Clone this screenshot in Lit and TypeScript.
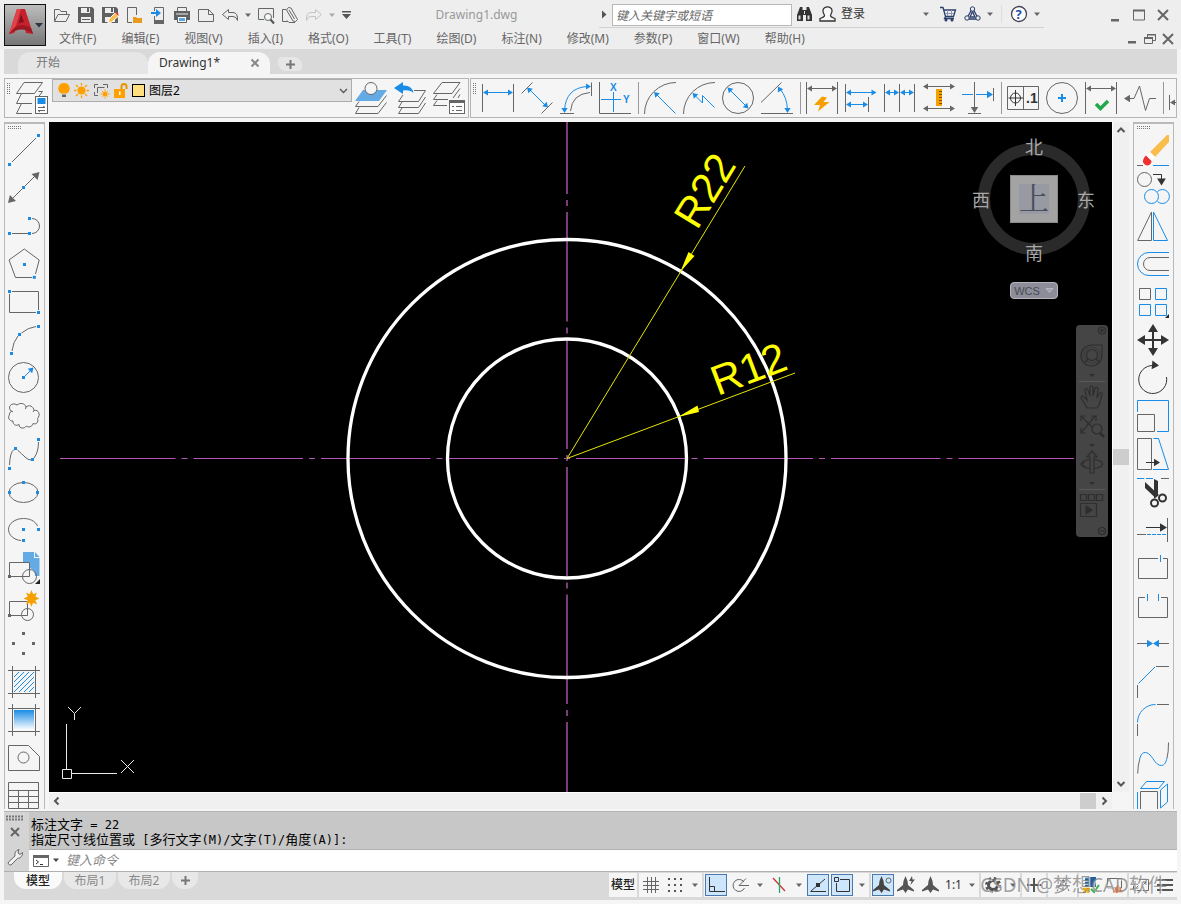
import { LitElement, html, svg, css, nothing } from "lit";
import { customElement, state } from "lit/decorators.js";

type Art = unknown;

/* ---- small drawing vocabulary shared by every toolbar glyph ---- */
const g = (d: string) => svg`<path class="g" d=${d} />`;
const b = (d: string) => svg`<path class="b" d=${d} />`;
const k = (d: string) => svg`<path class="k" d=${d} />`;
const fill = (c: string, d: string) => svg`<path d=${d} fill=${c} />`;
const dot = (x: number, y: number, c = "#1a8ce6") =>
  svg`<rect x=${x - 1.5} y=${y - 1.5} width="3" height="3" fill=${c} />`;
const ring = (x: number, y: number, r: number, cls = "g") =>
  svg`<circle class=${cls} cx=${x} cy=${y} r=${r} />`;
const head = (x: number, y: number, deg: number, c = "#1a8ce6", s = 5) =>
  svg`<path fill=${c} transform=${`translate(${x} ${y}) rotate(${deg})`} d=${`M0 0L${-s} ${-s * 0.62}V${s * 0.62}Z`} />`;
const GRAY = "#666";
const DARK = "#333";
const BLUE = "#1a8ce6";

const pic = (w: number, h: number, art: Art) =>
  html`<svg width=${w} height=${h} viewBox=${`0 0 ${w} ${h}`} aria-hidden="true">${art}</svg>`;
const caret = (c = "#666") => html`<svg width="8" height="5" viewBox="0 0 8 5" aria-hidden="true"><path d="M1 0.500h6L4 4z" fill=${c} /></svg>`;

interface Tool { name: string; art: Art }

const drawTools: Tool[] = [
  { name: "直线", art: [g("M4 28L28 4"), dot(1.5, 30.5), dot(30.5, 1.5)] },
  { name: "构造线", art: [g("M4 27L27 4"), head(0, 31, 135, GRAY, 7), head(31.5, 0, -45, GRAY, 7), dot(15.5, 15.5)] },
  { name: "多段线", art: [g("M4 23.5H20M24 8.5A7.5 7.5 0 0 1 24 23.5"), dot(1.5, 23.5), dot(21.5, 23.5), dot(21.5, 8.5)] },
  { name: "多边形", art: [g("M24 29.5H7.5L1 12L16.3 1L31.2 12L27.5 26"), dot(26.3, 29.3), dot(16.5, 16.5)] },
  { name: "矩形", art: [g("M4 5.500H30.500V24M28 26.500H1.500V8"), dot(1.5, 5.5), dot(30.5, 26.5)] },
  { name: "圆弧", art: [g("M4 27Q5 18 10 12M13.500 9Q20 3.500 28 2.500"), dot(3.5, 29.5), dot(11.5, 10.5), dot(30.5, 2.5)] },
  { name: "圆", art: [ring(15.5, 15.5, 15), b("M16 15L23 8"), head(25.5, 5.5, -45), dot(15.5, 15.5)] },
  { name: "修订云线", art: [g("M3.500 11.500C-1.500 7 4 1.500 9 5C12 2.500 17 3 18 7C21 4.500 25.500 6 26 10.500C30.500 9 33 15 29.500 18.500C31 22 28 25 25 23.500C24 27.500 20 27.500 18.500 26C16.500 29 11 29 11 24.500C8 26.500 4.500 24.500 5 21C1 21.500 -0.500 17 1.500 15C1 13.500 2 12 3.500 11.500Z"), g("M2.500 11Q4 11 5 12M18 7L17.500 9M26 10.500L25 12")] },
  { name: "样条曲线", art: [g("M1.500 27Q2 14 6 11.500M9.500 12Q14 16 17 19Q20 22 23 22M26 20Q30.500 14 30.500 4"), dot(1.5, 30.5), dot(7.5, 10.5), dot(24.5, 21.5), dot(30.5, 1.5)] },
  { name: "椭圆", art: [svg`<ellipse class="g" cx="15.500" cy="16.500" rx="14.500" ry="10" />`, dot(15.5, 6.5), dot(1.5, 16.5), dot(29.5, 16.5)] },
  { name: "椭圆弧", art: [g("M29.500 12C27 6.500 21 4.500 15.500 4.500C7 4.500 .5 9.500 .5 15.500C.5 21 6 26 13 26.500"), dot(15.5, 15.5), dot(30.5, 15.5), dot(15.5, 26.5)] },
  { name: "插入块", art: [fill("#64aae4", "M15 0H26V6H31.500V24H27A7 7 0 0 0 21.500 16V10H15Z"), fill("#64aae4", "M27 0L31.500 5H27Z"), g("M1.500 24.500V10.500H21.500V24.500Z"), ring(21.5, 24.5, 7), dot(1.5, 24.5, GRAY), fill("#222", "M32 27V32H27Z")] },
  { name: "创建块", art: [g("M1.500 25.500V11.500H19.500V25.500Z"), ring(19.5, 24.5, 6), dot(1.5, 25.5, GRAY), fill("#f5a000", "M23.500 0L25.200 4.200L29 2.500L27.300 6.500L31.500 8.500L27.300 10.300L29 14.500L25 12.700L23.500 17L21.800 12.700L18 14.500L19.800 10.300L15.500 8.500L19.800 6.500L18 2.500L21.800 4.200Z")] },
  { name: "点", art: [dot(15.5, 5.5, GRAY), dot(5.5, 15.5, GRAY), dot(25.5, 15.5, GRAY), dot(15.5, 25.5, GRAY)] },
  { name: "图案填充", art: [g("M4.500 0V32M27.500 0V32M0 4.500H32M0 27.500H32"), b("M6 11L11 6M6 16L16 6M6 21L21 6M6 26L26 6M11 26L26 11M16 26L26 16M21 26L26 21")] },
  { name: "渐变色", art: [svg`<defs><linearGradient id="fade" x1="0" y1="0" x2="0" y2="1"><stop offset="0" stop-color="#1a8ce6" /><stop offset="1" stop-color="#ffffff" /></linearGradient></defs><rect x="6" y="6" width="20" height="20" fill="url(#fade)" />`, g("M4.500 0V32M27.500 0V32M0 4.500H32M0 27.500H32")] },
  { name: "面域", art: [g("M.5 3.500H20.500L31.500 14.500V28.500H.5Z"), ring(15.5, 15.5, 5.5)] },
  { name: "表格", art: [g("M.5 2.500H30.500V28.500H.5ZM.5 10.500H30.500M.5 16.500H30.500M.5 22.500H30.500M10.500 10.500V28.500M20.500 10.500V28.500")] },
];

const editTools: Tool[] = [
  { name: "删除", art: [g("M0 31.500H6"), b("M16 31.500H32"), fill("#f9bd4e", "M13 18L30 1H32V8L18 23Z"), fill("#fff", "M9 22L13 18L18 23L14 27Z"), fill("#f03030", "M9 21.500L14.500 27A4.300 4.300 0 1 1 6.500 25Q7 23 9 21.500Z")] },
  { name: "复制", art: [ring(7.5, 7.5, 7), k("M16 2.500H24.500V9"), head(24.5, 13.5, 90, DARK, 7), ring(14.5, 24.5, 7, "b"), b("M20.500 19.500A7 7 0 1 1 20.500 29.500")] },
  { name: "镜像", art: [g("M.7 30.500H14.500V2Z"), b("M16.500 2V30.500H30.500Z")] },
  { name: "偏移", art: [b("M32 4.500H12A11.500 11.500 0 0 0 12 27.500H32"), g("M32 9.500H13A6.500 6.500 0 0 0 13 22.500H32")] },
  { name: "阵列", art: [g("M2.500 2.500H13.500V13.500H2.500Z"), b("M18.500 2.500H29.500V13.500H18.500ZM2.500 18.500H13.500V29.500H2.500ZM18.500 18.500H29.500V29.500H18.500Z"), fill("#222", "M32 28V32H28Z")] },
  { name: "移动", art: [svg`<path d="M16 5V27M5 16H27" stroke="#333" stroke-width="2" />`, head(16, 0, -90, DARK, 8), head(16, 32, 90, DARK, 8), head(0, 16, 180, DARK, 8), head(32, 16, 0, DARK, 8)] },
  { name: "旋转", art: [k("M29.500 15A14 14 0 1 1 16 3.500"), head(22, 3.5, 5, DARK, 7)] },
  { name: "缩放", art: [b("M.5 12V.5H31.500V31.500H20"), g("M.5 14.500H17.500V31.500H.5Z")] },
  { name: "拉伸", art: [g("M.5 .5H14.500V31.500H.5Z"), b("M16.500 .5H21.500L31.500 31.500H16"), k("M9 24.500H20"), head(23, 24.5, 0, DARK, 6)] },
  { name: "修剪", art: [b("M0 2.500H7M9 2.500H16"), g("M24 2.500H32"), fill(DARK, "M8 6L22 19L18.500 22L8 12ZM17 3L21 5V18L17 23Z"), svg`<circle cx="17.500" cy="27" r="3.500" fill="none" stroke="#333" stroke-width="2" /><circle cx="25.500" cy="22" r="3.500" fill="none" stroke="#333" stroke-width="2" />`] },
  { name: "延伸", art: [k("M9 13.500H24"), head(30, 13.5, 0, DARK, 7), g("M30.500 4V28M0 20.500H9"), b("M10 20.500H14M15 20.500H19M20 20.500H24M25 20.500H29")] },
  { name: "打断于点", art: [g("M21 6.500H1.500V26.500H30.500V6.500H26"), b("M23.500 3V10")] },
  { name: "打断", art: [g("M8 7.500H1.500V27.500H30.500V7.500H24"), b("M10.500 4V11M21.500 4V11")] },
  { name: "合并", art: [g("M0 15.500H10M22 15.500H32"), head(16, 15.5, 0, BLUE, 6), head(16, 15.5, 180, BLUE, 6)] },
  { name: "倒角", art: [g("M19 .5H32M.5 19V32"), b("M1.500 17.500L18 1")] },
  { name: "圆角", art: [g("M20 .5H32M.5 20V32"), b("M.5 18.500A18 18 0 0 1 18.500 .5")] },
  { name: "光顺曲线", art: [g("M.7 31.500Q1 23 2.500 18M31.500 .5Q31.500 11 30 16"), b("M2.500 18C4 9 9 9 13 13C17 17 19 23.500 24.500 23.500C27.500 23.500 29 20 30 16")] },
  { name: "分解", art: [b("M3.500 8.500L9.500 1.500H27.500L21.500 8.500ZM23.500 10L30.500 4V22L23.500 28ZM.5 12V32"), g("M3.500 11.500H20.500V32M3.500 11.500V32")] },
];

const vbars = g("M.5 2V30M31.500 2V30");
const bigArc = g("M.5 32A31.500 31.500 0 0 1 32 .5");

const dimGroups: Tool[][] = [
  [
    { name: "线性", art: [vbars, b("M2 10.500H30"), head(1, 10.5, 180), head(31, 10.5, 0)] },
    { name: "对齐", art: [g("M.5 11.500L11.500 .5M20.500 31.500L31.500 20.500"), b("M8 7L26 25"), head(6, 5.5, -135), head(27, 25.5, 45)] },
    { name: "弧长", art: [g("M31.500 .5V14M0 31.500H14M10.500 29Q12 12 30 10.500"), b("M4.500 28Q6 6 27 4.500"), head(31, 4.5, 0), head(4.5, 31, 90)] },
    { name: "坐标", art: [g("M.5 0V31.500H32"), b("M2 17.500H22M14.500 10V30"), svg`<text x="11" y="9" class="axis">X</text><text x="24" y="21" class="axis">Y</text>`] },
  ],
  [
    { name: "半径", art: [bigArc, b("M12 12L31.500 31.500"), head(10, 10, -135)] },
    { name: "折弯", art: [bigArc, b("M11 12.500L19.500 21V13.500L31.500 25.500"), head(9.5, 11, -135)] },
    { name: "直径", art: [ring(16, 16, 15.5), b("M7 7L25 25"), head(5.5, 5.5, -135), head(26.5, 26.5, 45)] },
    { name: "角度", art: [g("M0 20.500L20.500 .5M0 31.500H32"), b("M19 7Q26 15 26.500 28"), head(17, 4.5, -120), head(26.5, 31, 90)] },
  ],
  [
    { name: "快速标注", art: [g("M.5 0V32M31.500 0V32M2 6.500H30"), head(1, 6.5, 180, GRAY), head(31, 6.5, 0, GRAY), fill("#f5a000", "M16 14.500L8 23H14L12 29.500L23.500 20H17.500L21 15.500Z")] },
    { name: "基线", art: [g("M.5 2V30M23.500 15V30"), b("M2 10.500H30M2 22.500H22"), head(1, 10.5, 180), head(31.5, 10.5, 0), head(1, 22.5, 180), head(23, 22.5, 0)] },
    { name: "连续", art: [g("M.5 2V30M15.500 2V30M30.500 2V30"), b("M2 10.500H14M17 10.500H29"), head(1, 10.5, 180), head(15, 10.5, 0), head(16, 10.5, 180), head(30, 10.5, 0)] },
    { name: "等距标注", art: [g("M2 4.500H30M2 26.500H30"), head(0, 4.5, 180, GRAY), head(32, 4.5, 0, GRAY), head(0, 26.5, 180, GRAY), head(32, 26.5, 0, GRAY), fill("#f5a000", "M13 7H19V24H13Z"), svg`<path d="M16 9.500H19M16 12.500H19M16 15.500H19M16 18.500H19M16 21.500H19" stroke="#7a5200" stroke-width="1" />`] },
    { name: "折断标注", art: [g("M12.500 0V26M6 31.500H19M31.500 6V19"), b("M0 12.500H11M14 12.500H26"), head(31, 12.5, 0, BLUE, 6), head(12.5, 31, 90, GRAY, 6)] },
  ],
  [
    { name: "公差", art: [g("M.5 4.500H31.500V27.500H.5ZM16.500 4.500V27.500"), svg`<path class="k" d="M8.500 8V24M1.500 16H16" />`, ring(8.5, 16, 5, "k"), svg`<text x="19" y="21" class="tol">.1</text>`] },
    { name: "圆心标记", art: [ring(16, 16, 15.5), svg`<path d="M16 12V20M12 16H20" stroke="#1a8ce6" stroke-width="2" />`] },
    { name: "检验", art: [g("M.5 0V32M31.500 0V32M2 6.500H30"), head(1, 6.5, 180, GRAY), head(31, 6.5, 0, GRAY), svg`<path d="M11 22L15.500 26.500L23 19" fill="none" stroke="#22a84c" stroke-width="3.500" />`] },
    { name: "折弯线性", art: [g("M5 16.500H10L15.500 4L21.500 28.500L25.500 16.500H32"), head(0, 16.5, 180, GRAY, 6)] },
  ],
  [
    { name: "编辑标注", art: [g("M.5 13V28M3 20.500H30"), head(1, 20.5, 180, GRAY), head(31, 20.5, 0, GRAY)] },
  ],
];

const layerProps: Art = [
  g("M8 .5H26.500L18.500 11.500H.5ZM5.500 11.500L.5 21.500H16M22.500 9.500H26.500L22 15.500M5.500 21.500L.5 31.500H16"),
  svg`<rect x="19.500" y="14.500" width="12" height="17" fill="#fff" stroke="#666" />`,
  fill(BLUE, "M21.500 16H29.500V22H21.500Z"),
  g("M22 25.500H29M27 24L29 25.500M22 28.500H29M24 30L22 28.500"),
];
const layerTools: Tool[] = [
  { name: "将对象的图层置为当前", art: [fill("#64aae4", "M8 8H32L24 19H0Z"), svg`<circle cx="16" cy="6.500" r="6" fill="#f5f5f5" stroke="#666" />`, g("M4 19.500L.5 24.500H23L31.500 13.500M4 25.500L.5 31.500H23L31.500 20.500")] },
  { name: "上一个图层", art: [g("M20 8.500H31.500L24.500 19.500H4.500L9 13M8 20L4.500 25.500H24.500L31.500 15M8 26L4.500 31.500H24.500L31.500 21"), fill(BLUE, "M0 6L9 0V3.500Q18 3 19.500 11Q16 7.500 9 8.500V12Z")] },
  { name: "图层特性匹配", art: [g("M9 .5H27L19 11.500H.5ZM4 12.500L.5 17.500H15M20 16L27 6.500M4 18.500L.5 23.500H14M25 16L27 12.500"), svg`<rect x="16.500" y="18.500" width="15" height="13" fill="#fff" stroke="#666" />`, fill(GRAY, "M16 18H32V21H16Z"), g("M19 24.500H21M23 24.500H29M19 28.500H21M23 28.500H29")] },
];

/* 18px quick-access glyphs */
const fileTools: Tool[] = [
  { name: "打开", art: [g("M1.500 15.500V3.500H6.500L8 5.500H13.500V8.500M1.500 15.500L5 8.500H16.500L13 15.500Z")] },
  { name: "保存", art: [svg`<path d="M1 1H15L17 3V17H1Z" fill="#606060" /><path d="M4 2H13V7H4ZM4 11H14V16H4Z" fill="#eee" /><path d="M10 2h2v4h-2zM5 13h8v1H5z" fill="#606060" />`] },
  { name: "另存为", art: [svg`<path d="M1 1H15L17 3V17H1Z" fill="#606060" /><path d="M4 2H13V7H4ZM4 11H14V16H4Z" fill="#eee" /><path d="M10 2h2v4h-2z" fill="#606060" /><path d="M7 17L8 13L14 7L17.500 10L11 16Z" fill="#f9bd4e" stroke="#fff" /><path d="M14 7l3.500 3 0-2-2-2z" fill="#e33" />`] },
  { name: "从 Web 打开", art: [g("M11.500 9V1.500H2.500V16.500H7"), fill("#e89a1c", "M8 11H11L12 12H17V17H8Z")] },
  { name: "保存到 Web", art: [g("M5.500 5V1.500H14.500V17.500H5.500V10"), fill(GRAY, "M5 14H15V18H5Z"), fill(BLUE, "M2 6H7V3L12 7L7 11V8H2Z")] },
  { name: "打印", art: [svg`<path d="M4.500 5V1.500H13.500V5" class="g" /><path d="M1 5H17V14H1Z" fill="#606060" /><path d="M3 7.500H15V8.500H3Z" fill="#eee" /><path d="M4.500 10.500H13.500V16.500H4.500Z" fill="#fff" stroke="#606060" /><path d="M6 12H12V15H6Z" fill="#5aa6e2" />`] },
  { name: "新建图纸", art: [g("M1.500 3.500H11.500L16.500 8.500V15.500H1.500ZM11.500 3.500V8.500H16.500")] },
];
const undoArt = g("M1.500 8.500L7.500 3.500V6.500H12Q17 6.500 16.500 14.500Q15.500 10.500 12 10.500H7.500V13.500Z");
const redoArt = svg`<path d="M16.500 8.500L10.500 3.500V6.500H6Q1 6.500 1.500 14.500Q2.500 10.500 6 10.500H10.500V13.500Z" fill="none" stroke="#c4c4c4" />`;
const previewArt: Art = [g("M1.500 2.500H16.500V12M1.500 2.500V13.500H7"), svg`<circle cx="11" cy="11" r="3.500" fill="#f3f8fc" stroke="#666" />`, svg`<path d="M13.500 13.500L17 17.500" stroke="#555" stroke-width="2" />`];
const clipArt: Art = [g("M7 15.500H1.500V3.500H5M14 16.500H8L6 14.500"), g("M5.500 4L12 15Q15 17 16.500 13.500L10 2Q7 0 5.500 4ZM8 4L13.500 13")];

const menus = ["文件(F)", "编辑(E)", "视图(V)", "插入(I)", "格式(O)", "工具(T)", "绘图(D)", "标注(N)", "修改(M)", "参数(P)", "窗口(W)", "帮助(H)"];

const history = ["标注文字 = 22", "指定尺寸线位置或 [多行文字(M)/文字(T)/角度(A)]:"];
const mixed = (line: string) =>
  line.split(/([\x20-\x7e]+)/).map((part) => (/^[\x20-\x7e]+$/.test(part) ? html`<span class="mono">${part}</span>` : part));

@customElement("app-root")
export class AppRoot extends LitElement {
  @state() private layout = "模型";

  static styles = css`
    :host {
      display: flex;
      flex-direction: column;
      height: 100vh;
      box-sizing: border-box;
      overflow: hidden;
      background: #f5f5f5;
      color: #5a5a5a;
      font: 12px/16px "Noto Sans", "Noto Sans CJK SC", sans-serif;
    }
    * { box-sizing: border-box; }
    svg { display: block; flex: none; overflow: visible; }
    button, input, select { font: inherit; color: inherit; margin: 0; }
    button { display: flex; align-items: center; justify-content: center; padding: 0; border: 0; background: none; flex: none; }
    .g { fill: none; stroke: #666; }
    .b { fill: none; stroke: #1a8ce6; }
    .k { fill: none; stroke: #333; }
    .axis { font: bold 10px "Liberation Sans", sans-serif; fill: #1a8ce6; }
    .tol { font: bold 14px "Liberation Sans", sans-serif; fill: #333; }
    .grow { flex: 1; }

    .head { display: grid; grid-template-columns: 46px 1fr; background: #eee; height: 49px; flex: none; }
    .logo { width: 42px; height: 42px; margin: 4px 0 0 4px; border: 1px solid #111; background: linear-gradient(#bdbdbd, #777); }
    .rows { display: flex; flex-direction: column; min-width: 0; }
    .quick { display: flex; align-items: center; height: 30px; padding-left: 4px; }
    .q { width: 24px; height: 24px; }
    .drop { width: 12px; height: 24px; }
    .drop.menu-end { width: 16px; }
    .title { flex: 1; text-align: center; color: #999; white-space: nowrap; }
    .info { display: flex; align-items: center; height: 27px; width: 445px; border-bottom: 1px solid #d2d2d2; margin: 0 59px 1px 0; }
    .search { width: 180px; height: 22px; margin: 2px 0 0 4px; padding: 0 3px; border: 1px solid #b8b8b8; background: #fff; border-radius: 0; }
    .search::placeholder, .cmd::placeholder { font-style: italic; color: #666; opacity: 1; }
    .login { width: 120px; gap: 5px; padding: 0 6px 0 3px; color: #333; }
    .vline { width: 1px; height: 18px; background: #ddd; margin: 0 5px; }
    .wins { display: flex; padding-right: 6px; }
    .menu { display: flex; align-items: center; height: 17px; padding: 0 4px 0 1px; }
    .menu a { padding: 0 13px 0 12px; color: #666; text-decoration: none; white-space: nowrap; }
    .mdi { display: flex; margin-left: auto; }
    .mdi button { width: 18px; height: 18px; }

    .docs { display: flex; align-items: flex-end; height: 25px; margin: 0 4px; padding-left: 14px; background: #d9d9d9; flex: none; }
    .doc { display: flex; align-items: center; height: 22px; padding: 0 18px; background: #e6e6e6; border-radius: 12px 12px 0 0; color: #777; }
    .doc.first { width: 130px; justify-content: flex-start; }
    .doc.on { width: 122px; background: #f5f5f5; padding: 0 10px 0 11px; color: #333; justify-content: space-between; }
    .doc.add { width: 24px; height: 14px; padding: 0; margin: 0 0 3px 8px; border-radius: 4px 8px 4px 8px; }

    .bars { display: flex; height: 48px; padding: 4px; flex: none; }
    .bar { display: flex; height: 40px; border: 1px solid #b5b5b5; background: #f5f5f5; padding-top: 3px; overflow: hidden; }
    .bar.layers { width: 465px; flex: none; }
    .bar.dims { flex: 1; min-width: 0; margin-left: 1px; }
    .grip { width: 11px; height: 13px; flex: none; padding: 1px 0 0 2px; }
    .t { width: 39px; height: 32px; justify-content: flex-start; }
    .lp { width: 36px; height: 32px; justify-content: flex-start; }
    .sep { width: 6px; border-left: 1px solid #999; height: 32px; flex: none; }
    .combo { display: flex; align-items: center; flex: none; width: 300px; height: 23px; margin: -3px 3px 0 0; padding-left: 5px; gap: 4px; border: 1px solid #adadad; background: #e1e1e1; }
    .combo .swatch { width: 13px; height: 13px; border: 1px solid #000; background: #ffdf80; }
    .combo select { flex: 1; min-width: 0; appearance: none; border: 0; background: none; padding: 0; color: #000; height: 20px; }
    .combo > svg:last-child { margin-right: 3px; }

    .main { display: flex; flex: 1; min-height: 0; padding: 0 7px 2px 4px; }
    .side { width: 41px; border: 2px solid #b9b9b9; border-width: 2px 1px 0; overflow: hidden; flex: none; }
    .dots { height: 7px; padding: 2px 0 0 3px; }
    .side button { width: 38px; height: 38px; }
    .view { display: grid; grid-template: 1fr 17px / 1fr 17px; flex: 1; min-width: 0; margin: 0 4px; }
    .canvas { position: relative; background: #000; min-width: 0; min-height: 0; overflow: hidden; }
    .canvas > svg { width: 100%; height: 100%; }
    .canvas .note { font: 42px "Liberation Sans", Arial, sans-serif; fill: #ff0; }
    .compass { position: absolute; top: 10px; right: 12px; width: 132px; display: flex; flex-direction: column; align-items: center; gap: 12px; }
    .compass .dir { font: 18px "Noto Sans CJK SC", sans-serif; fill: #a8a8a8; text-anchor: middle; }
    .compass .up { font: 30px "Noto Serif CJK SC", "Noto Sans CJK SC", sans-serif; fill: #4b4f59; text-anchor: middle; }
    .wcs { width: 48px; height: 17px; border: 1px solid #b4b4bd; border-radius: 4px; background: #8c8d99; color: #4a4a52; font: 11px "Liberation Sans", sans-serif; gap: 5px; }
    .nav { position: absolute; top: 203px; right: 4px; width: 32px; height: 212px; border-radius: 4px; background: #454545; }
    .nav svg { opacity: 0.85; }
    .vs { display: flex; flex-direction: column; align-items: center; background: #f0f0f0; border-left: 1px solid #fff; }
    .hs { display: flex; align-items: center; background: #f0f0f0; border-top: 1px solid #fff; }
    .arrow { width: 16px; height: 16px; }
    .thumb { width: 16px; height: 16px; background: #cdcdcd; }

    .command { display: grid; grid-template-columns: 25px 1fr; height: 60px; margin: 0 4px; border-top: 1px solid #b5b5b5; background: #c7c7c7; color: #000; flex: none; }
    .handle { display: flex; flex-direction: column; align-items: center; gap: 6px; background: #d4d4d4; padding: 3px 3px 0 0; }
    .log { height: 38px; padding: 4px 2px 0; border-bottom: 1px solid #b0b0b0; font: 13px/15px "Noto Sans CJK SC", sans-serif; white-space: pre; }
    .log div { height: 15px; }
    .mono { font: 12px/12px "DejaVu Sans Mono", monospace; }
    .entry { display: flex; align-items: center; height: 21px; background: #fff; padding-left: 4px; gap: 2px; }
    .cmd { flex: 1; border: 0; padding: 0 4px 2px; background: none; height: 19px; font-size: 13px; outline: none; }
    .cmd::placeholder { color: #888; }

    .foot { display: flex; align-items: flex-start; height: 29px; margin: 0 4px 4px; border-top: 1px solid #b0b0b0; background: #d9d9d9; flex: none; }
    .tabs { display: flex; gap: 2px; padding-left: 10px; }
    .tab { height: 17px; width: 52px; border-radius: 0 0 12px 12px; background: #e8e8e8; color: #888; }
    .tab.on { width: 48px; background: #fafafa; color: #222; font-weight: 500; }
    .tab.add { width: 26px; }
    .status { display: flex; gap: 2px; margin-left: auto; padding-top: 1px; position: relative; color: #333; }
    .cell { display: flex; align-items: center; height: 24px; background: #f5f5f5; }
    .cell button { width: 24px; height: 22px; }
    .cell .wide { width: 28px; color: #222; font-weight: 500; }
    .cell .d { width: 15px; }
    .cell .act { width: 22px; margin: 0 1px; border: 1px solid #4a7aad; background: #cde6fb; }
    .cell .scale { width: 21px; }
    .cell .end { width: 29px; }
    .mark { position: absolute; right: 10px; top: 1px; font: 19px/24px "Noto Sans", "Noto Sans CJK SC", sans-serif; color: rgba(130, 130, 130, 0.75); text-shadow: 1px 1px 0 rgba(255, 255, 255, 0.7); white-space: nowrap; pointer-events: none; }
  `;

  private tool(t: Tool, cls: string, size = 32) {
    return html`<button class=${cls} title=${t.name} aria-label=${t.name}>${pic(size, size, t.art)}</button>`;
  }

  private barGrip() {
    return html`<span class="grip">${pic(4, 12, svg`<path d="M.5 0V12M2.500 0V12" stroke="#777" stroke-dasharray="1 1" />`)}</span>`;
  }

  private sideGrip() {
    return html`<div class="dots">${pic(14, 4, svg`<path d="M0 .5H14M0 2.500H14" stroke="#777" stroke-dasharray="1 1" />`)}</div>`;
  }

  private header() {
    return html`<header class="head">
      <button class="logo" aria-label="应用程序菜单">
        ${pic(38, 38, svg`
          <path d="M3 28L11 3H19L27 28L20 27L18 20Q11 20 8 27Z" fill="#c8202c" />
          <path d="M11 3H15L9 22Q6 25 3 28Z" fill="#e0424a" />
          <path d="M15 8L18 16Q14 16 12.500 18Z" fill="#7c1118" />
          <path d="M8 22Q16 16 25 22L27 28Q16 19 3 28Z" fill="#9e1822" />
          <path d="M29 17H37L33 21.500Z" fill="#2c3440" />`)}
      </button>
      <div class="rows">
        <div class="quick">
          ${fileTools.map((t) => this.tool(t, "q", 18))}
          ${this.tool({ name: "放弃", art: undoArt }, "q", 18)}
          <button class="drop" aria-label="放弃列表">${caret()}</button>
          ${this.tool({ name: "打印预览", art: previewArt }, "q", 18)}
          ${this.tool({ name: "图纸集", art: clipArt }, "q", 18)}
          ${this.tool({ name: "重做", art: redoArt }, "q", 18)}
          <button class="drop" aria-label="重做列表">${caret("#aaa")}</button>
          <button class="drop menu-end" aria-label="自定义快速访问工具栏">${pic(9, 8, svg`<path d="M0 0H9V1.500H0ZM0 3H9L4.500 8Z" fill="#555" />`)}</button>
          <div class="title">Drawing1.dwg</div>
          <div class="info">
            ${pic(9, 9, fill("#555", "M3 0.500L7.500 4.500L3 8.500Z"))}
            <input class="search" aria-label="搜索" placeholder="键入关键字或短语" />
            <button class="q" aria-label="搜索">${pic(17, 16, svg`<path d="M4 1H6.500V4H10.500V1H13L16 9V15H10V9H7V15H1V9Z" fill="#333" /><path d="M2.500 9.500h2v4h-2zM11.500 9.500h2v4h-2zM5 3v4M12 3v4M8 5h1v3H8z" fill="#ddd" />`)}</button>
            <button class="login">${pic(17, 16, svg`<path d="M5.500 9.500Q3.500 6 4 4Q5 .8 8.500 .8T13 4Q13.500 6 11.500 9.500Q11.500 11 16 12.500V15H1V12.500Q5.500 11 5.500 9.500Z" fill="#f8f8f8" stroke="#333" stroke-width="1.300" />`)}<span>登录</span><span class="grow"></span>${caret()}</button>
            <button class="q" aria-label="App Store">${pic(18, 16, svg`<path d="M1 1.500H4L6.500 10.500H14.500L16.500 4H5M6.500 10.500L5.500 12.500H15" fill="none" stroke="#2b3d6b" stroke-width="1.300" /><path d="M8.500 4V10M12.500 4V10M6 7.500H15" stroke="#8a96b4" /><circle cx="7" cy="14" r="1.500" fill="#2b3d6b" /><circle cx="13" cy="14" r="1.500" fill="#2b3d6b" />`)}</button>
            <button class="q" aria-label="Autodesk App">${pic(17, 16, svg`<path d="M8.500 2L14.500 13H2.500ZM8.500 5.500L11 11H6Z" fill="none" stroke="#2b3d6b" stroke-width="1.300" /><circle cx="8.500" cy="3" r="2.200" fill="#eee" stroke="#2b3d6b" /><circle cx="3" cy="12" r="2.200" fill="#eee" stroke="#2b3d6b" /><circle cx="14" cy="12" r="2.200" fill="#eee" stroke="#2b3d6b" />`)}</button>
            <button class="drop" aria-label="应用列表">${caret()}</button>
            <span class="vline"></span>
            <button class="q" aria-label="帮助">${pic(18, 18, svg`<circle cx="9" cy="9" r="7.500" fill="#fff" stroke="#445" stroke-width="1.300" /><text x="5.500" y="13.500" font-family="Noto Sans" font-size="13" font-weight="bold" fill="#1f4fb0">?</text>`)}</button>
            <button class="drop" aria-label="帮助列表">${caret()}</button>
          </div>
          <div class="wins">
            <button class="q" aria-label="最小化">${pic(12, 14, fill(GRAY, "M2 11H10V13.500H2Z"))}</button>
            <button class="q" aria-label="最大化">${pic(12, 12, svg`<path d="M.5 1.500H11.500V11H.5Z" fill="none" stroke="#666" /><path d="M0 .5H12V2.500H0Z" fill="#666" />`)}</button>
            <button class="q" aria-label="关闭">${pic(12, 12, svg`<path d="M1 1L11 11M11 1L1 11" stroke="#666" stroke-width="2" />`)}</button>
          </div>
        </div>
        <nav class="menu" aria-label="主菜单">
          ${menus.map((m) => html`<a href="#">${m}</a>`)}
          <div class="mdi">
            <button aria-label="最小化图形">${pic(12, 12, fill(GRAY, "M2 8H10V10.500H2Z"))}</button>
            <button aria-label="还原图形">${pic(12, 12, svg`<path d="M3.500 4V1.500H11.500V7.500H9" fill="none" stroke="#666" /><path d="M.5 4.500H8.500V10.500H.5Z" fill="none" stroke="#666" /><path d="M0 4H9V6H0ZM3 1H12V2.500H3Z" fill="#666" />`)}</button>
            <button aria-label="关闭图形">${pic(12, 12, svg`<path d="M1 1L11 11M11 1L1 11" stroke="#666" stroke-width="2" />`)}</button>
          </div>
        </nav>
      </div>
    </header>`;
  }

  private toolbars() {
    return html`<div class="bars">
      <div class="bar layers">
        ${this.barGrip()}
        <button class="lp" title="图层特性" aria-label="图层特性">${pic(32, 32, layerProps)}</button>
        <div class="combo">
          ${pic(12, 15, svg`<path d="M6 0A5.500 5.500 0 0 1 8.500 10.500H3.500A5.500 5.500 0 0 1 6 0Z" fill="#ffa000" /><path d="M4 11.500H8V14H4Z" fill="#666" />`)}
          ${pic(15, 15, svg`<circle cx="7.500" cy="7.500" r="4" fill="#ffa000" /><path d="M7.500 0V2.500M7.500 12.500V15M0 7.500H2.500M12.500 7.500H15M2 2L4 4M13 2L11 4M2 13L4 11M13 13L11 11" stroke="#ffa000" stroke-width="1.300" />`)}
          ${pic(17, 16, svg`<path d="M1.500 5V1.500H5M10 1.500H14.500V5M1.500 9V12.500H5M4.500 10V4.500H11.500" fill="none" stroke="#666" /><circle cx="12" cy="11" r="2.500" fill="#ffa000" /><path d="M12 6.500V15.500M7.500 11H16.500M9 8L15 14M15 8L9 14" stroke="#ffa000" stroke-dasharray="1.500 6" />`)}
          ${pic(14, 15, svg`<path d="M7.500 6V3.500Q7.500 1 10 1T12.500 3.500V6" fill="none" stroke="#e69500" stroke-width="2" /><path d="M0 6H11V15H0Z" fill="#ffa000" /><path d="M5 8.500H6.500V12H5Z" fill="#fff" />`)}
          <span class="swatch"></span>
          <select aria-label="图层"><option>图层2</option></select>
          ${pic(9, 6, svg`<path d="M1 1L4.500 4.500L8 1" fill="none" stroke="#555" stroke-width="1.300" />`)}
        </div>
        ${layerTools.map((t) => this.tool(t, "t"))}
      </div>
      <div class="bar dims">
        ${this.barGrip()}
        ${dimGroups.map((group, i) => html`${i ? html`<span class="sep"></span>` : nothing}${group.map((t) => this.tool(t, "t"))}`)}
      </div>
    </div>`;
  }

  private drawing() {
    return html`<svg viewBox="49 122 1063 670" role="img" aria-label="图形">
      <g stroke="#b455b4" fill="none">
        <path d="M60 458.500H66M1068 458.500H1074" />
        <path d="M66 458.500H1068" stroke-dasharray="109.500 6 6 6" />
        <path d="M567 84.500V792" stroke="#7a3c7a" stroke-width="2" stroke-dasharray="109.500 6 6 6" />
      </g>
      <circle cx="567" cy="458.500" r="219" fill="none" stroke="#fff" stroke-width="3.300" />
      <circle cx="567" cy="458.500" r="119.500" fill="none" stroke="#fff" stroke-width="3.300" />
      <path d="M745 166L567 458.500L795 373" fill="none" stroke="#e6e600" />
      <path d="M680.500 271.500L688.500 252L694.500 256ZM678 417L697.500 405.500L699 412Z" fill="#ff0" />
      <text class="note" transform="translate(697 231) rotate(-58.700)">R22</text>
      <text class="note" transform="translate(717.500 396) rotate(-20.600)">R12</text>
      <g stroke="#e8e8e8" fill="none">
        <path d="M66.500 769V724M71 773.500H117M62.500 769.500H71.500V778.500H62.500Z" />
        <path d="M68 707L74.500 713.500L81 707M74.500 713.500V720M121 760L134 773M134 760L121 773" />
      </g>
    </svg>`;
  }

  private overlays() {
    return html`<div class="compass">
        <svg width="132" height="138" viewBox="968 132 132 138" aria-hidden="true">
          <circle cx="1034" cy="199" r="50" fill="none" stroke="#2a2a2a" stroke-width="12" />
          <rect x="1010.500" y="175.500" width="47" height="47" fill="#a3a3a3" stroke="#8a8a8a" />
          <rect x="1019" y="184" width="30" height="30" fill="#989aa3" />
          <text class="up" x="1034" y="209">上</text>
          <text class="dir" x="1034" y="154">北</text>
          <text class="dir" x="1034" y="260">南</text>
          <text class="dir" x="981" y="207">西</text>
          <text class="dir" x="1086" y="207">东</text>
        </svg>
        <button class="wcs">WCS ${pic(9, 6, svg`<path d="M1 .5H8L4.500 4.500Z" fill="#a0a1ad" stroke="#b9b9c4" />`)}</button>
      </div>
      <div class="nav" role="toolbar" aria-label="导航栏">
        <svg width="32" height="212" viewBox="0 0 32 212" fill="none" stroke="#2a2a2a" stroke-width="1.200" aria-hidden="true">
          <circle cx="26" cy="5.500" r="3.500" /><path d="M24.500 4L27.500 7M27.500 4L24.500 7" />
          <path d="M16 20H26V30A10.500 10.500 0 1 1 16 20Z" /><circle cx="16" cy="30" r="5.500" /><circle cx="16" cy="30" r="8" stroke="#3a3a3a" /><path d="M12 34L9 37M20 34L23 37" />
          <path d="M13 49H19L16 52Z" fill="#2a2a2a" stroke="none" />
          <path d="M3 56.500H29" stroke="#5c5c5c" />
          <path d="M11 83Q8 77 5 73Q5 70 8 72L11 75L9 65Q10 62 12 65L14 71V62Q15.500 60 17 62V71L19 63Q21 61 22 64L21 73L24 68Q27 67 26 70L23 80L21 83Z" />
          <path d="M5 91L19 105M19 91L5 108M5 96V91H10M15 91H20V96M5 103V108H10" />
          <circle cx="21" cy="104" r="5" fill="#454545" /><path d="M24 108L28 112" stroke-width="2.500" />
          <path d="M13 119H19L16 122Z" fill="#2a2a2a" stroke="none" />
          <ellipse cx="16" cy="139" rx="10.500" ry="4.500" /><path d="M14 148V132H11L16 126L21 132H18V148Z" fill="#454545" /><path d="M9 142L5 139L9 137" />
          <path d="M13 157H19L16 160Z" fill="#2a2a2a" stroke="none" />
          <path d="M3 164.500H29" stroke="#5c5c5c" />
          <path d="M4.500 169.500H10.500V175.500H4.500ZM12.500 169.500H18.500V175.500H12.500ZM20.500 169.500H26.500V175.500H20.500ZM4.500 178.500H20.500V191.500H4.500Z" />
          <path d="M10 181V189L16 185Z" fill="#2a2a2a" />
          <circle cx="26" cy="206" r="3.500" /><path d="M24 206H28" />
        </svg>
      </div>`;
  }

  private chevron(d: string) {
    return pic(10, 10, svg`<path d=${d} fill="none" stroke="#555" stroke-width="2" />`);
  }

  private workspace() {
    return html`<main class="main">
      <div class="side" role="toolbar" aria-label="绘图">${this.sideGrip()}${drawTools.map((t) => this.tool(t, "s"))}</div>
      <div class="view">
        <div class="canvas">${this.drawing()}${this.overlays()}</div>
        <div class="vs">
          <button class="arrow" aria-label="向上滚动">${this.chevron("M1.500 7L5 3.500L8.500 7")}</button>
          <span class="grow"></span><span class="thumb"></span><span class="grow"></span>
          <button class="arrow" aria-label="向下滚动">${this.chevron("M1.500 3L5 6.500L8.500 3")}</button>
        </div>
        <div class="hs">
          <button class="arrow" aria-label="向左滚动">${this.chevron("M6.500 1.500L3 5L6.500 8.500")}</button>
          <span class="grow"></span><span class="thumb"></span>
          <button class="arrow" aria-label="向右滚动">${this.chevron("M3.500 1.500L7 5L3.500 8.500")}</button>
        </div>
      </div>
      <div class="side" role="toolbar" aria-label="修改">${this.sideGrip()}${editTools.map((t) => this.tool(t, "s"))}</div>
    </main>`;
  }

  private commandLine() {
    return html`<section class="command">
      <div class="handle">
        ${pic(18, 6, svg`<path d="M0 1.500H18M0 4.500H18" stroke="#777" stroke-width="2" stroke-dasharray="2 1" />`)}
        <button aria-label="关闭命令行">${pic(10, 10, svg`<path d="M1 1L9 9M9 1L1 9" stroke="#666" stroke-width="2" />`)}</button>
        <button aria-label="自定义">${pic(16, 24, svg`<path d="M1.500 19L8 13Q7 8 12 6.500L11 10L13 11.500L15.500 9.500Q16 14.500 10.500 15.500L4 22Q.5 22 1.500 19Z" fill="#f0f0f0" stroke="#666" />`)}</button>
      </div>
      <div>
        <div class="log">${history.map((line) => html`<div>${mixed(line)}</div>`)}</div>
        <div class="entry">
          ${pic(17, 12, svg`<path d="M.5 .5H15.500V11.500H.5Z" fill="#fff" stroke="#666" /><path d="M0 0H16V3H0Z" fill="#666" /><path d="M3 5L5.500 7L3 9M7 9.500H10" fill="none" stroke="#333" />`)}
          <button aria-label="最近使用的命令">${caret("#444")}</button>
          <input class="cmd" aria-label="命令" placeholder="键入命令" />
        </div>
      </div>
    </section>`;
  }

  private footer() {
    const person = "M8.500 0L10.500 5L11 9L17 14V15.500L11 13.500L8.500 17L6 13.500L0 15.500V14L6 9L6.500 5Z";
    return html`<footer class="foot">
      <div class="tabs">
        ${["模型", "布局1", "布局2"].map(
          (t) => html`<button class="tab ${this.layout === t ? "on" : ""}" @click=${() => (this.layout = t)}>${t}</button>`,
        )}
        <button class="tab add" aria-label="新建布局">${pic(9, 9, svg`<path d="M4.500 0V9M0 4.500H9" stroke="#777" stroke-width="2" />`)}</button>
      </div>
      <div class="status">
        <div class="cell"><button class="wide">模型</button></div>
        <div class="cell">
          <button aria-label="栅格">${pic(16, 16, g("M4.500 0V16M8.500 0V16M12.500 0V16M0 4.500H16M0 8.500H16M0 12.500H16"))}</button>
          <button aria-label="捕捉模式">${pic(16, 16, [2, 8, 14].map((x) => [2, 8, 14].map((y) => svg`<rect x=${x - 1} y=${y - 1} width="2" height="2" fill="#555" />`)))}</button>
          <button class="d" aria-label="捕捉设置">${caret()}</button>
        </div>
        <div class="cell">
          <button class="act" aria-label="正交模式">${pic(18, 18, k("M2.500 1V15.500H18M2.500 10.500H7.500V15.500"))}</button>
          <button aria-label="极轴追踪">${pic(17, 16, g("M12 5A6 6 0 1 0 12.500 11M7 8.500H17M7 8.500L14 1.500"))}</button>
          <button class="d" aria-label="极轴设置">${caret()}</button>
          <button aria-label="等轴测草图">${pic(16, 16, svg`<path d="M2 1L14 14" stroke="#c33" stroke-width="1.300" /><path d="M8.500 0V16" stroke="#2a6" stroke-width="1.300" />`)}</button>
          <button class="d" aria-label="等轴测设置">${caret()}</button>
          <button class="act" aria-label="对象捕捉追踪">${pic(18, 18, [k("M1.500 15.500H17M2 15L16 3"), fill(DARK, "M7 7H11V11H7Z")])}</button>
          <button class="act" aria-label="对象捕捉">${pic(18, 18, k("M1.500 1.500H5.500V5.500H1.500ZM7 3.500H16.500V15.500H3.500V7"))}</button>
          <button class="d" aria-label="对象捕捉设置">${caret()}</button>
        </div>
        <div class="cell">
          <button class="act" aria-label="注释可见性">${pic(20, 18, [svg`<path d=${person} fill="#444" />`, ring(15.5, 4.5, 2.5)])}</button>
          <button aria-label="自动缩放">${pic(20, 18, [svg`<path d=${person} fill="#555" />`, fill("#555", "M15 0L12 5H14.500L13.500 9L18 3.500H15.500Z")])}</button>
          <button aria-label="注释比例图标">${pic(18, 18, svg`<path d=${person} fill="#555" />`)}</button>
          <button class="scale">1:1</button>
          <button class="d" aria-label="注释比例">${caret()}</button>
        </div>
        <div class="cell">
          <button aria-label="切换工作空间">${pic(16, 16, svg`<circle cx="8" cy="8" r="4.500" fill="none" stroke="#555" stroke-width="3" /><circle cx="8" cy="8" r="6.500" fill="none" stroke="#555" stroke-width="3" stroke-dasharray="2.500 2.600" />`)}</button>
          <button class="d" aria-label="工作空间列表">${caret()}</button>
        </div>
        <div class="cell"><button aria-label="注释监视器">${pic(16, 16, svg`<path d="M8 1V15M1 8H15" stroke="#555" stroke-width="2" />`)}</button></div>
        <div class="cell"><button class="end" aria-label="隔离对象">${pic(16, 16, g("M2 14L8 2L14 14M1 9H15M8 2V14"))}</button></div>
        <div class="cell">
          <button aria-label="图形性能">${pic(18, 18, svg`<path d="M3 1H14V11H3Z" fill="#1d5f9e" /><path d="M1 11H8V17H1Z" fill="#f2a900" /><path d="M9 13L12 16L17 9" fill="none" stroke="#39b54a" stroke-width="2" />`)}</button>
          <button aria-label="全屏警告">${pic(18, 18, [g("M1.500 2.500H15.500V12H1.500Z"), fill("#f26722", "M12 8L17 17H7Z")])}</button>
        </div>
        <div class="cell">
          <button aria-label="全屏显示">${pic(16, 16, g("M.5 2.500H15.500V13.500H.5ZM3 11L6 8M13 5L10 8M10 5H13V8"))}</button>
          <button aria-label="自定义">${pic(16, 14, svg`<path d="M0 2H16M0 7H16M0 12H16" stroke="#555" stroke-width="2" />`)}</button>
        </div>
        <span class="mark">CSDN @梦想CAD软件</span>
      </div>
    </footer>`;
  }

  render() {
    return html`${this.header()}
      <div class="docs">
        <button class="doc first">开始</button>
        <button class="doc on">Drawing1* ${pic(10, 10, svg`<path d="M1.500 1.500L8.500 8.500M8.500 1.500L1.500 8.500" stroke="#888" stroke-width="2" />`)}</button>
        <button class="doc add" aria-label="新图形">${pic(9, 9, svg`<path d="M4.500 0V9M0 4.500H9" stroke="#777" stroke-width="2" />`)}</button>
      </div>
      ${this.toolbars()}${this.workspace()}${this.commandLine()}${this.footer()}`;
  }
}
